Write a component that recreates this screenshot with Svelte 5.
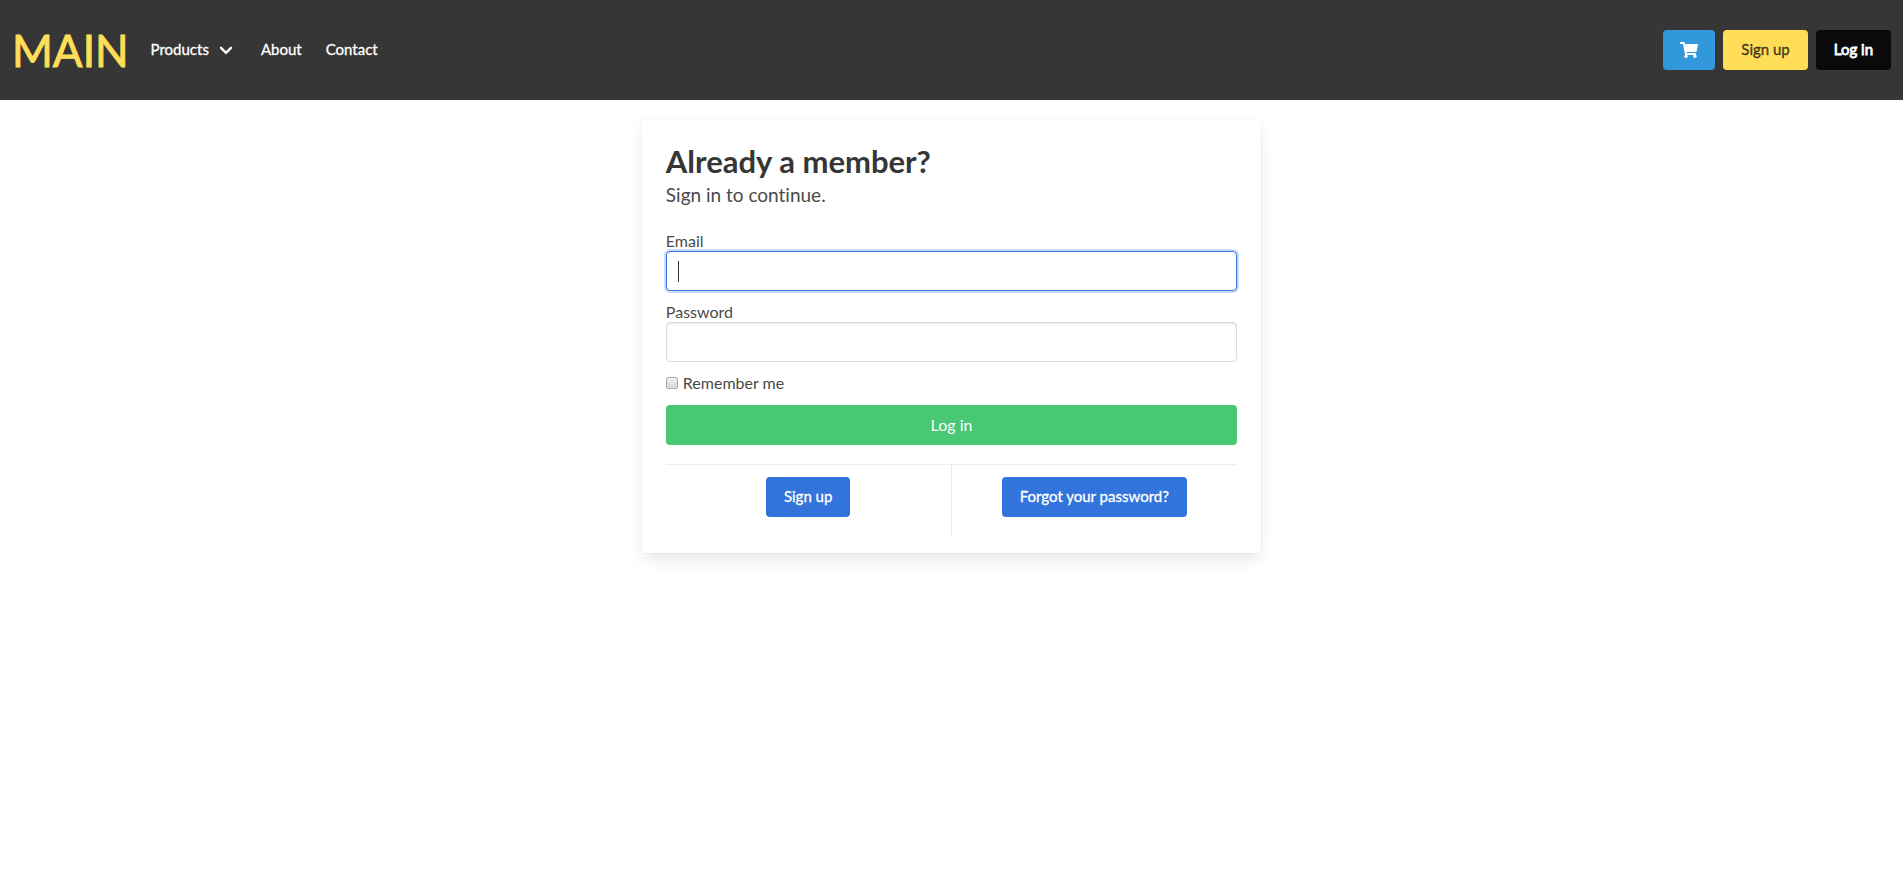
<script lang="ts">
  let email = $state('');
  let password = $state('');
  let remember = $state(false);
</script>

<header class="navbar">
  <a class="brand" href="#home">MAIN</a>
  <nav class="links" aria-label="Primary">
    <button class="link dropdown" type="button" aria-haspopup="true">
      Products
      <svg class="chevron" viewBox="0 0 14 14" aria-hidden="true"><path d="M2 5.8 7 10.8l5-5" /></svg>
    </button>
    <a class="link" href="#about">About</a>
    <a class="link" href="#contact">Contact</a>
  </nav>
  <div class="actions">
    <a class="button cart" href="#cart" aria-label="Cart">
      <svg viewBox="0 0 576 512" aria-hidden="true"><path d="M528.12 301.319l47.273-208C578.806 78.301 567.391 64 551.99 64H159.208l-9.166-44.81C147.758 8.021 137.93 0 126.529 0H24C10.745 0 0 10.745 0 24v16c0 13.255 10.745 24 24 24h69.883l70.248 343.435C147.325 417.1 136 435.222 136 456c0 30.928 25.072 56 56 56s56-25.072 56-56c0-15.674-6.447-29.835-16.824-40h209.647C430.447 426.165 424 440.326 424 456c0 30.928 25.072 56 56 56s56-25.072 56-56c0-22.172-12.888-41.332-31.579-50.405l5.517-24.276c3.413-15.018-8.002-29.319-23.403-29.319H218.117l-6.545-32h293.145c11.206 0 20.92-7.754 23.403-18.681z" /></svg>
    </a>
    <a class="button signup" href="#signup">Sign up</a>
    <a class="button login" href="#login">Log in</a>
  </div>
</header>

<main class="page">
  <section class="box">
    <h1>Already a member?</h1>
    <p class="subtitle">Sign in to continue.</p>
    <form onsubmit={(e) => e.preventDefault()}>
      <label for="email">Email</label>
      <div class="control active">
        <input id="email" class="input" type="email" bind:value={email} />
        <span class="caret" aria-hidden="true"></span>
      </div>
      <label for="password">Password</label>
      <div class="control">
        <input id="password" class="input" type="password" bind:value={password} />
      </div>
      <div class="remember">
        <input id="remember" type="checkbox" bind:checked={remember} />
        <label for="remember">Remember me</label>
      </div>
      <button class="button submit" type="submit">Log in</button>
    </form>
    <div class="options">
      <div class="option"><a class="button primary" href="#signup">Sign up</a></div>
      <div class="option"><a class="button primary" href="#forgot">Forgot your password?</a></div>
    </div>
  </section>
</main>

<style>
  :global(body) {
    background: #fff;
    color: #4a4a4a;
    font-family: Lato, "Open Sans", sans-serif;
    font-size: 16px;
    font-variant-ligatures: none;
    line-height: 24px;
  }
  a { text-decoration: none; }
  button, input { font-family: inherit; font-size: inherit; }

  .navbar {
    display: flex;
    align-items: center;
    min-height: 100px;
    padding: 0 12px;
    background: #363636;
  }
  .brand {
    padding-right: 10px;
    color: #ffdd57;
    font-size: 44px;
    line-height: 60px;
    -webkit-text-stroke: 1px currentColor;
  }
  .links { display: flex; align-items: center; }
  .link {
    display: flex;
    align-items: center;
    padding: 7px 12px 9px;
    border: 0;
    background: none;
    color: #fff;
    font-size: 15px;
    line-height: 24px;
    -webkit-text-stroke: 0.3px currentColor;
  }
  .dropdown { padding-right: 16px; gap: 10px; }
  .chevron { width: 14px; height: 14px; fill: none; stroke: #fff; stroke-width: 2.4; stroke-linecap: round; }
  .actions { display: flex; gap: 8px; margin-left: auto; }

  .button {
    box-sizing: border-box;
    display: inline-flex;
    align-items: center;
    justify-content: center;
    height: 40px;
    padding: 0 18px 2px;
    border: 0;
    border-radius: 4px;
    font-size: 15px;
    line-height: 24px;
    white-space: nowrap;
  }
  .cart { padding: 0 17px; background: #3298dc; color: #fff; }
  .cart svg { width: 18px; height: 16px; fill: currentColor; }
  .signup { background: #ffdd57; color: rgba(0, 0, 0, 0.7); -webkit-text-stroke: 0.4px currentColor; }
  .login { background: #0a0a0a; color: #fff; -webkit-text-stroke: 0.8px currentColor; }

  .page { display: flex; justify-content: center; padding: 19px 12px; }
  .box {
    box-sizing: border-box;
    width: calc(33.333vw - 15px);
    min-width: 420px;
    padding: 24px 24px 16px;
    background: #fff;
    box-shadow: 0 8px 16px -2px rgba(10, 10, 10, 0.1), 0 0 0 1px rgba(10, 10, 10, 0.02);
  }
  h1 { margin: 0; color: #363636; font-size: 31px; font-weight: 700; line-height: 36px; }
  .subtitle { margin: 4px 0 22px; font-size: 19px; line-height: 24px; }
  label { display: block; line-height: 24px; }
  .control { position: relative; margin-bottom: 9px; }
  form > label { padding-top: 2px; line-height: 20px; }
  .input {
    box-sizing: border-box;
    display: block;
    width: 100%;
    height: 40px;
    padding: 0 11px;
    border: 1px solid #dbdbdb;
    border-radius: 4px;
    outline: none;
    background: #fff;
    color: #363636;
    box-shadow: inset 0 1px 2px rgba(10, 10, 10, 0.1);
  }
  .active .input, .input:focus {
    border-color: #3273dc;
    box-shadow: 0 0 0 2px rgba(50, 115, 220, 0.25);
  }
  .caret {
    position: absolute;
    top: 10px;
    left: 12px;
    width: 1px;
    height: 21px;
    background: #363636;
  }
  .active:focus-within .caret { display: none; }
  .remember { display: flex; align-items: center; gap: 5px; margin-bottom: 10px; }
  .remember input {
    appearance: none;
    box-sizing: border-box;
    width: 12px;
    height: 12px;
    margin: 0;
    border: 1px solid #a9a9a9;
    border-radius: 2px;
    background: linear-gradient(#eee, #d9d9d9);
  }
  .remember input:checked { background: #3273dc; }
  .submit { width: 100%; padding: 0 18px; background: #48c774; color: #fff; font-size: 16px; }
  .options {
    display: grid;
    grid-template-columns: 1fr 1fr;
    margin-top: 19px;
    border-top: 1px solid #ededed;
  }
  .option { display: flex; justify-content: center; padding: 12px 0 20px; }
  .option:first-child { border-right: 1px solid #ededed; }
  .primary { background: #3273dc; color: #fff; -webkit-text-stroke: 0.3px currentColor; }
</style>
